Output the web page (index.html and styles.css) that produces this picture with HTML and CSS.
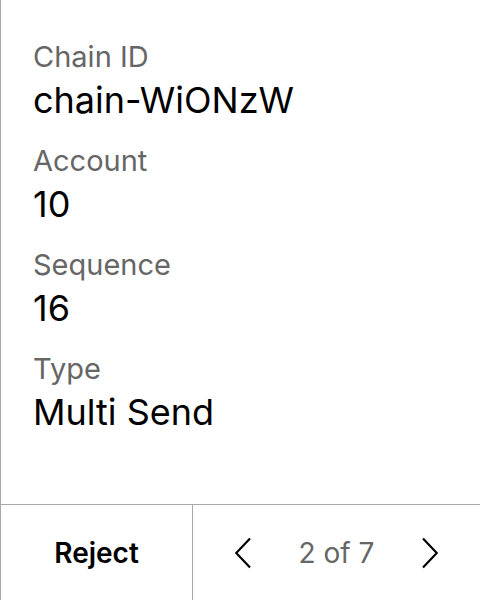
FILE: index.html
```html
<!DOCTYPE html>
<html>
<head>
<meta charset="utf-8">
<link rel="stylesheet" href="styles.css">
</head>
<body>
<div class="screen">
  <div class="details">
    <div class="field">
      <div class="label">Chain ID</div>
      <div class="value">chain-WiONzW</div>
    </div>
    <div class="field">
      <div class="label">Account</div>
      <div class="value">10</div>
    </div>
    <div class="field">
      <div class="label">Sequence</div>
      <div class="value">16</div>
    </div>
    <div class="field">
      <div class="label">Type</div>
      <div class="value">Multi Send</div>
    </div>
  </div>
  <div class="footer">
    <div class="reject">Reject</div>
    <div class="pager">
      <svg class="chev" width="16" height="32" viewBox="0 0 16 32"><path d="M15 1.5 L1.2 16 L15 30.5" fill="none" stroke="#000" stroke-width="2.2"/></svg>
      <span class="count">2 of 7</span>
      <svg class="chev" width="16" height="32" viewBox="0 0 16 32"><path d="M1 1.5 L14.8 16 L1 30.5" fill="none" stroke="#000" stroke-width="2.2"/></svg>
    </div>
  </div>
</div>
</body>
</html>
```
FILE: styles.css
```css
html, body {
  margin: 0;
  padding: 0;
  background: #fff;
}
body {
  font-family: Inter, "Noto Sans", sans-serif;
  color: #000;
}
.screen {
  width: 480px;
  height: 600px;
  box-sizing: border-box;
  border-left: 1px solid #a9a9a9;
  display: flex;
  flex-direction: column;
}
.details {
  flex: 1;
  padding: 41px 0 0 32px;
  display: flex;
  flex-direction: column;
  gap: 25px;
}
.field {
  display: flex;
  flex-direction: column;
  gap: 7px;
}
.label {
  font-size: 29px;
  line-height: 32px;
  color: #666;
}
.value {
  font-size: 36px;
  line-height: 40px;
  color: #000;
}
.footer {
  height: 96px;
  border-top: 1px solid #a9a9a9;
  display: flex;
  box-sizing: border-box;
}
.reject {
  width: 191px;
  border-right: 1px solid #a9a9a9;
  display: flex;
  align-items: center;
  justify-content: center;
  font-size: 28px;
  font-weight: 600;
}
.pager {
  flex: 1;
  display: flex;
  align-items: center;
  justify-content: center;
  gap: 48px;
}
.count {
  font-size: 28px;
  color: #666;
}
.chev {
  display: block;
}
```
